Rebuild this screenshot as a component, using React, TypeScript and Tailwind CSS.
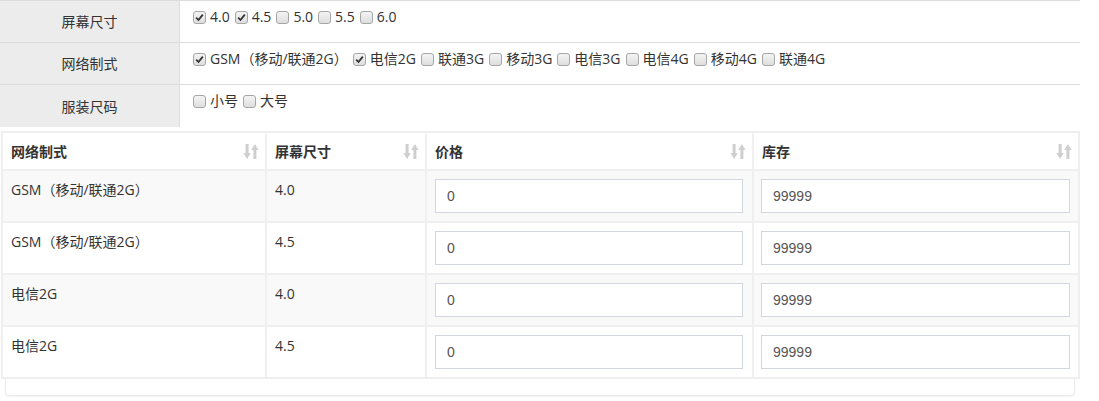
import React from 'react'

const FONT = 'font-["Open_Sans","Noto_Sans_CJK_SC",sans-serif]'

function Box({ checked }: { checked?: boolean }) {
  return (
    <span className="inline-flex items-center justify-center w-[13px] h-[13px] rounded-[3px] border border-[#a6a6a6] bg-gradient-to-b from-[#f4f4f4] to-[#dedede] shrink-0">
      {checked && (
        <svg width="9" height="9" viewBox="0 0 9 9">
          <path d="M1.2 4.6 L3.5 7 L7.8 1.6" fill="none" stroke="#333" strokeWidth="1.8" />
        </svg>
      )}
    </span>
  )
}

function Options({ items }: { items: { label: string; checked?: boolean }[] }) {
  return (
    <div className="flex items-start gap-[5px] pt-[6px] pl-[13px] text-[14px] text-[#333]">
      {items.map((it) => (
        <label key={it.label} className="flex items-center gap-[4px] h-[20px] leading-[20px]">
          <Box checked={it.checked} />
          <span>{it.label}</span>
        </label>
      ))}
    </div>
  )
}

function SortIcon() {
  return (
    <svg width="16" height="17" viewBox="0 0 16 17" className="shrink-0">
      <g fill="#cfcfcf">
        <rect x="2.6" y="1" width="3" height="10" />
        <path d="M0.4 10 L7.8 10 L4.1 16 Z" />
        <rect x="10.4" y="6" width="3" height="10" />
        <path d="M8.2 7 L15.6 7 L11.9 1 Z" />
      </g>
    </svg>
  )
}

const specs = [
  {
    name: '屏幕尺寸',
    items: [
      { label: '4.0', checked: true },
      { label: '4.5', checked: true },
      { label: '5.0' },
      { label: '5.5' },
      { label: '6.0' },
    ],
  },
  {
    name: '网络制式',
    items: [
      { label: 'GSM（移动/联通2G）', checked: true },
      { label: '电信2G', checked: true },
      { label: '联通3G' },
      { label: '移动3G' },
      { label: '电信3G' },
      { label: '电信4G' },
      { label: '移动4G' },
      { label: '联通4G' },
    ],
  },
  {
    name: '服装尺码',
    items: [{ label: '小号' }, { label: '大号' }],
  },
]

const skus = [
  { net: 'GSM（移动/联通2G）', size: '4.0' },
  { net: 'GSM（移动/联通2G）', size: '4.5' },
  { net: '电信2G', size: '4.0' },
  { net: '电信2G', size: '4.5' },
]

export default function App() {
  return (
    <div className={`w-[1099px] h-[401px] bg-white overflow-hidden ${FONT}`}>
      <div className="w-[1080px] border-t border-[#dcdcdc]">
        {specs.map((s, i) => (
          <div
            key={s.name}
            className={`flex h-[42px] ${i < specs.length - 1 ? 'border-b border-[#dcdcdc]' : ''}`}
          >
            <div className="w-[180px] shrink-0 bg-[#ececec] border-r border-[#dcdcdc] flex items-center justify-center text-[14px] text-[#333]">
              {s.name}
            </div>
            <Options items={s.items} />
          </div>
        ))}
      </div>

      <div className="pt-[4px]">
        <div className="ml-[1px] w-[1079px] border border-[#eeeeee] bg-[#f0f0f0] p-[1px] grid grid-cols-[262px_158px_325px_324px] gap-[2px] text-[14px] text-[#333]">
          {['网络制式', '屏幕尺寸', '价格', '库存'].map((h) => (
            <div key={h} className="bg-white h-[36px] flex items-center justify-between pl-[8px] pr-[6px] font-bold">
              <span>{h}</span>
              <SortIcon />
            </div>
          ))}
          {skus.map((r, i) => {
            const bg = i % 2 === 0 ? 'bg-[#f9f9f9]' : 'bg-white'
            return (
              <React.Fragment key={i}>
                <div className={`${bg} h-[50px] px-[8px] pt-[9px] leading-[20px]`}>{r.net}</div>
                <div className={`${bg} h-[50px] px-[8px] pt-[9px] leading-[20px]`}>{r.size}</div>
                <div className={`${bg} h-[50px] pl-[8px] pr-[9px] pt-[8px]`}>
                  <input
                    readOnly
                    value="0"
                    className='w-full h-[34px] border border-[#d2d6de] bg-white pl-[11px] text-[14px] text-[#555] font-["Liberation_Sans",sans-serif] outline-none'
                  />
                </div>
                <div className={`${bg} h-[50px] pl-[7px] pr-[8px] pt-[8px]`}>
                  <input
                    readOnly
                    value="99999"
                    className='w-full h-[34px] border border-[#d2d6de] bg-white pl-[11px] text-[14px] text-[#555] font-["Liberation_Sans",sans-serif] outline-none'
                  />
                </div>
              </React.Fragment>
            )
          })}
        </div>
        <div className="mx-[5px] w-[1070px] h-[17px] border border-t-0 border-[#ececec] rounded-b-[4px] shadow-[0_1px_2px_rgba(0,0,0,0.06)]" />
      </div>
    </div>
  )
}
